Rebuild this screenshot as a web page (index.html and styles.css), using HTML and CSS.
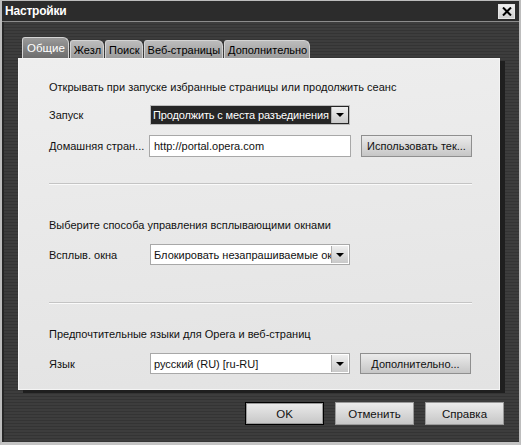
FILE: index.html
```html
<!DOCTYPE html>
<html lang="ru">
<head>
<meta charset="utf-8">
<title>Настройки</title>
<link rel="stylesheet" href="styles.css">
</head>
<body>
<div class="window">
  <div class="titlebar">
    <span class="title">Настройки</span>
    <span class="close"><svg width="10" height="9" viewBox="0 0 10 9"><path d="M1 0.5 L9 8.5 M9 0.5 L1 8.5" stroke="#000" stroke-width="2"/></svg></span>
  </div>
  <div class="body">
    <div class="tabs">
      <div class="tab active">Общие</div>
      <div class="tab">Жезл</div>
      <div class="tab">Поиск</div>
      <div class="tab">Веб-страницы</div>
      <div class="tab">Дополнительно</div>
    </div>
    <div class="panel">
      <div class="heading">Открывать при запуске избранные страницы или продолжить сеанс</div>
      <div class="row r1">
        <span class="label">Запуск</span>
        <div class="select dark"><span class="val tight">Продолжить с места разъединения</span><span class="drop"><i></i></span></div>
      </div>
      <div class="row r2">
        <span class="label">Домашняя стран...</span>
        <div class="input">http://portal.opera.com</div>
        <div class="btn wide">Использовать тек...</div>
      </div>
      <div class="sep s1"></div>
      <div class="heading h2">Выберите способа управления всплывающими окнами</div>
      <div class="row r3">
        <span class="label">Всплыв. окна</span>
        <div class="select"><span class="val">Блокировать незапрашиваемые окна</span><span class="drop"><i></i></span></div>
      </div>
      <div class="sep s2"></div>
      <div class="heading h3">Предпочтительные языки для Opera и веб-страниц</div>
      <div class="row r4">
        <span class="label">Язык</span>
        <div class="select"><span class="val">русский (RU) [ru-RU]</span><span class="drop"><i></i></span></div>
        <div class="btn wide">Дополнительно...</div>
      </div>
    </div>
    <div class="actions">
      <div class="btn act default">OK</div>
      <div class="btn act">Отменить</div>
      <div class="btn act">Справка</div>
    </div>
  </div>
</div>
</body>
</html>
```
FILE: styles.css
```css
html, body {
  margin: 0;
  padding: 0;
  background: #3a3a3a;
}
.window {
  width: 521px;
  height: 445px;
  box-sizing: border-box;
  border: 1px solid #bdbdbd;
  border-bottom: 3px solid #c4c4c4;
  border-left-width: 2px;
  border-right-width: 2px;
  background: #333;
  font-family: "Liberation Sans", Arial, sans-serif;
  font-size: 11px;
  color: #111;
  display: flex;
  flex-direction: column;
}
.titlebar {
  height: 20px;
  background: #2c2c2c;
  border-bottom: 1px solid #8c8c8c;
  display: flex;
  align-items: center;
  justify-content: space-between;
  padding: 0 4px 0 3px;
}
.title {
  color: #fff;
  font-weight: bold;
  font-size: 12px;
  letter-spacing: -0.2px;
}
.close {
  width: 15px;
  height: 13px;
  background: linear-gradient(#f0f0f0, #cfcfcf);
  border: 1px solid #e6e6e6;
  display: flex;
  align-items: center;
  justify-content: center;
  margin-top: 1px;
}
.body {
  flex: 1;
  background: repeating-linear-gradient(#3d3d3d 0 2px, #343434 2px 3px);
  padding: 15px 0 0 14px;
  border-left: 2px solid #262626;
}
.tabs {
  display: flex;
  align-items: flex-end;
  gap: 1px;
  height: 21px;
  margin-left: 4px;
}
.tab {
  height: 17px;
  line-height: 18px;
  padding: 0 2px 0 3px;
  background: linear-gradient(#bcbcbc, #9c9c9c);
  border: 1px solid #d4d4d4;
  border-bottom: none;
  border-radius: 3px 6px 0 0;
  font-size: 11px;
  color: #000;
}
.tab.active {
  height: 20px;
  line-height: 21px;
  padding: 0 3px 0 4px;
  background: linear-gradient(#9a9a9a, #6c6c6c);
  color: #fff;
  font-size: 11.5px;
}
.panel {
  width: 482px;
  height: 332px;
  box-sizing: border-box;
  background: linear-gradient(175deg, #eeeeee, #e3e3e3);
  border: 1px solid #f4f4f4;
  box-shadow: 5px 3px 0 #1f1f1f;
  padding: 21px 0 0 30px;
}
.heading {
  height: 14px;
  line-height: 14px;
  font-size: 11px;
}
.row {
  display: flex;
  align-items: center;
}
.label {
  width: 101px;
  font-size: 11px;
}
.r1 { margin-top: 11px; height: 20px; }
.r2 { margin-top: 10px; height: 22px; }
.r3 { margin-top: 12px; height: 21px; }
.r4 { margin-top: 12px; height: 21px; }
.select {
  width: 200px;
  height: 100%;
  box-sizing: border-box;
  border: 1px solid #a8a8a8;
  background: #fff;
  display: flex;
  align-items: center;
  overflow: hidden;
  font-size: 11px;
}
.select .val {
  flex: 1;
  white-space: nowrap;
  overflow: hidden;
  padding-left: 3px;
}
.select .val.tight {
  padding-left: 2px;
  letter-spacing: -0.15px;
}
.select.dark {
  background: #262626;
  color: #fff;
  border-color: #bcbcbc;
}
.drop {
  width: 16px;
  height: calc(100% - 2px);
  margin-right: 1px;
  background: linear-gradient(#efefef, #c9c9c9);
  border-left: 1px solid #b0b0b0;
  display: flex;
  align-items: center;
  justify-content: center;
  flex: none;
}
.drop i {
  width: 0;
  height: 0;
  border-left: 4px solid transparent;
  border-right: 4px solid transparent;
  border-top: 4px solid #000;
}
.input {
  width: 202px;
  height: 100%;
  box-sizing: border-box;
  border: 1px solid #a8a8a8;
  background: #fff;
  padding-left: 4px;
  display: flex;
  align-items: center;
  font-size: 11px;
  margin-left: -1px;
}
.btn {
  box-sizing: border-box;
  border: 1px solid #8f8f8f;
  background: linear-gradient(#ebebeb, #c6c6c6);
  display: flex;
  align-items: center;
  justify-content: center;
  font-size: 11px;
  white-space: nowrap;
}
.wide {
  width: 111px;
  height: 100%;
  margin-left: 10px;
}
.sep {
  width: 423px;
  border-top: 1px solid #c4c4c4;
  border-bottom: 1px solid #fafafa;
}
.s1 { margin-top: 26px; }
.h2 { margin-top: 33px; }
.s2 { margin-top: 37px; }
.h3 { margin-top: 23px; }
.actions {
  display: flex;
  justify-content: flex-end;
  gap: 11px;
  margin-top: 12px;
  width: 486px;
}
.act {
  width: 79px;
  height: 23px;
  font-size: 11.5px;
  border-color: #9a9a9a;
}
.act.default {
  border: 1px solid #000;
  box-shadow: inset 0 0 0 1px #9a9a9a;
}
```
